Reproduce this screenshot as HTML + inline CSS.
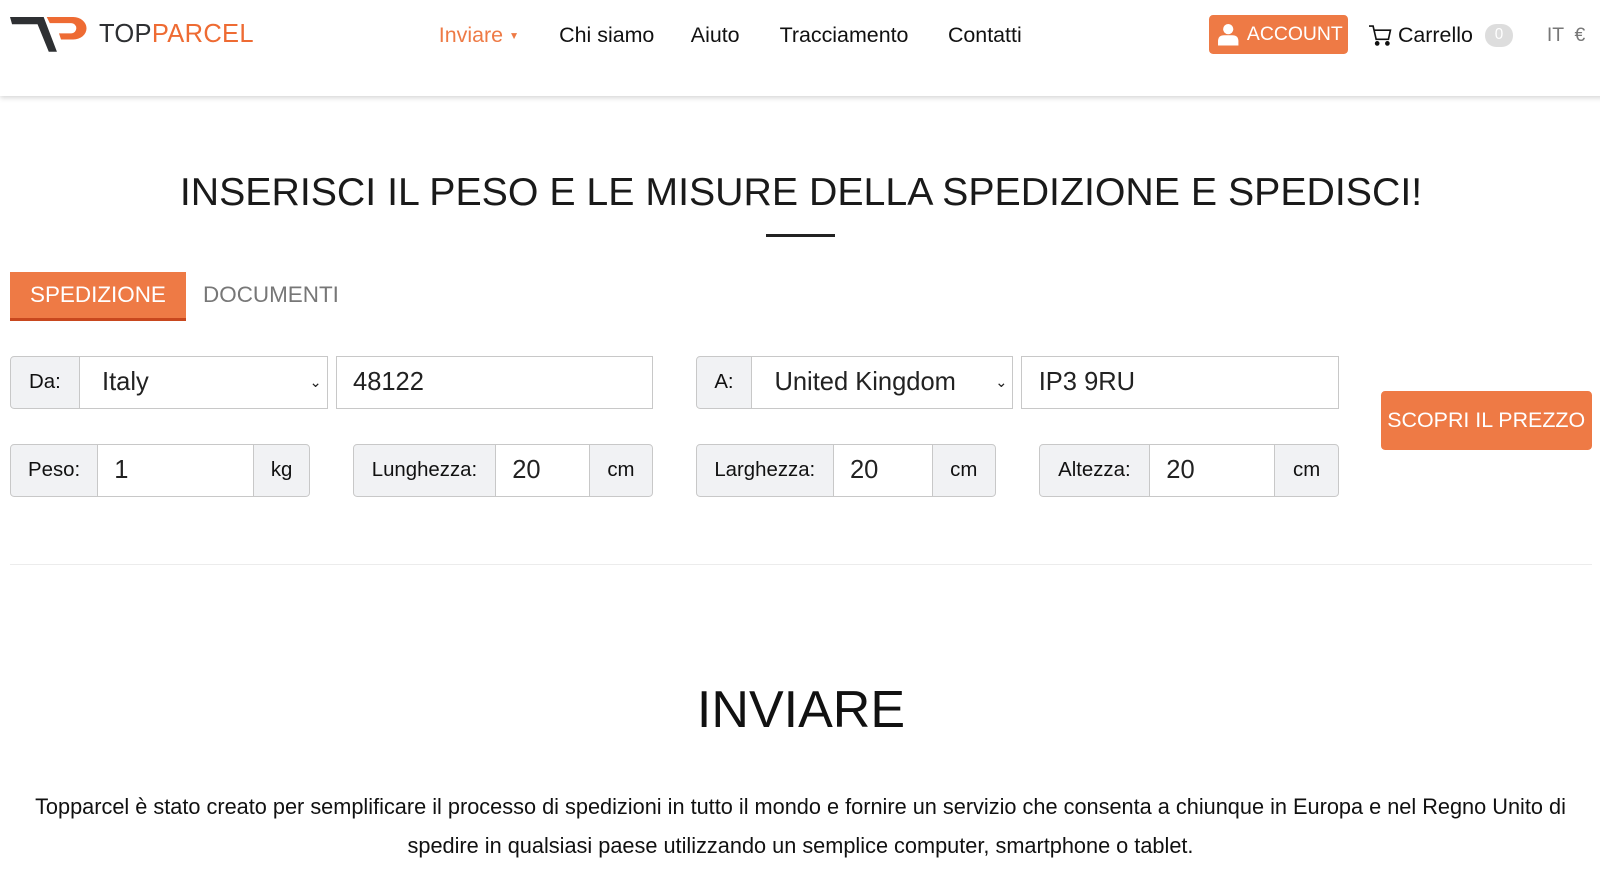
<!DOCTYPE html>
<html><head><meta charset="utf-8"><style>
*{box-sizing:border-box;margin:0;padding:0}
body{width:1600px;height:869px;background:#fff;font-family:"Liberation Sans",sans-serif;color:#111;overflow:hidden}
#w{position:relative;width:1568px;height:852px;zoom:1.0204}
.a{position:absolute}
.hdr{left:0;top:0;width:1600px;height:94px;background:#fff;box-shadow:0 2px 5px rgba(0,0,0,.18)}
.nav{font-size:21px;top:23px;color:#111}
.box{position:absolute;border:1px solid #c8c8c8;background:#fff;display:flex;align-items:center;font-size:25px;color:#222}
.lab{position:absolute;border:1px solid #c8c8c8;background:#f1f2f4;display:flex;align-items:center;justify-content:center;font-size:20px;color:#111}
</style></head><body><div id="w">
<div class="a hdr"></div>
<svg class="a" style="left:10px;top:14px" width="76" height="38" viewBox="0 0 76 38">
<polygon points="0,3 33,3 46,37 38,37 27,10 2,10" fill="#2e3033"/>
<path d="M36,3 H62 A13,11 0 0 1 62,25 H50 L48,19 H60 A5,5 0 0 0 60,9 H39 Z" fill="#ee6b33"/>
</svg>
<div class="a" style="left:97px;top:20px;font-size:25px;letter-spacing:0.3px"><span style="color:#2e3033">TOP</span><span style="color:#ee6b33">PARCEL</span></div>
<div class="a nav" style="left:430px;color:#ee7a45">Inviare <span style="font-size:10px;vertical-align:middle">▼</span></div>
<div class="a nav" style="left:548px">Chi siamo</div>
<div class="a nav" style="left:677px">Aiuto</div>
<div class="a nav" style="left:764px">Tracciamento</div>
<div class="a nav" style="left:929px">Contatti</div>
<div class="a" style="left:1185px;top:15px;width:136px;height:38px;background:#ee7a45;border-radius:4px;color:#fff;font-size:19px;display:flex;align-items:center">
<svg style="margin-left:8px" width="22" height="22" viewBox="0 0 22 22"><circle cx="11" cy="6" r="5" fill="#fff"/><path d="M1,22 V18 Q1,12 7,12 H15 Q21,12 21,18 V22Z" fill="#fff"/></svg>
<span style="margin-left:7px">ACCOUNT</span></div>
<svg class="a" style="left:1341px;top:23px" width="24" height="24" viewBox="0 0 24 24" fill="none" stroke="#111" stroke-width="1.6"><path d="M1,3 H5 L8,16 H20 L22,7 H6"/><circle cx="9" cy="20" r="1.5" fill="#111"/><circle cx="19" cy="20" r="1.5" fill="#111"/></svg>
<div class="a nav" style="left:1370px">Carrello</div>
<div class="a" style="left:1455px;top:24px;width:28px;height:22px;border-radius:11px;background:#ddd;color:#fff;font-size:15px;text-align:center;line-height:22px">0</div>
<div class="a" style="left:1516px;top:24px;font-size:19px;color:#777">IT &nbsp;€</div>

<div class="a" style="left:0;width:1570px;top:167px;text-align:center;font-size:38.5px;color:#1a1a1a">INSERISCI IL PESO E LE MISURE DELLA SPEDIZIONE E SPEDISCI!</div>
<div class="a" style="left:751px;top:229px;width:67px;height:3px;background:#222"></div>

<div class="a" style="left:10px;top:267px;width:172px;height:48px;background:#ee7a45;border-bottom:3px solid #c8471e;color:#fff;font-size:22px;text-align:center;line-height:46px">SPEDIZIONE</div>
<div class="a" style="left:199px;top:267px;height:48px;color:#777;font-size:22px;line-height:46px">DOCUMENTI</div>

<div class="lab" style="left:10px;top:349px;width:68px;height:52px;border-radius:4px 0 0 4px">Da:</div>
<div class="box" style="left:77px;top:349px;width:244px;height:52px;padding-left:22px">Italy<span style="position:absolute;right:5px;font-size:14px">⌄</span></div>
<div class="box" style="left:329px;top:349px;width:311px;height:52px;padding-left:16px">48122</div>
<div class="lab" style="left:682px;top:349px;width:55px;height:52px;border-radius:4px 0 0 4px">A:</div>
<div class="box" style="left:736px;top:349px;width:257px;height:52px;padding-left:22px">United Kingdom<span style="position:absolute;right:5px;font-size:14px">⌄</span></div>
<div class="box" style="left:1001px;top:349px;width:311px;height:52px;padding-left:16px">IP3 9RU</div>

<div class="lab" style="left:10px;top:435px;width:86px;height:52px;border-radius:4px 0 0 4px">Peso:</div>
<div class="box" style="left:95px;top:435px;width:154px;height:52px;padding-left:16px">1</div>
<div class="lab" style="left:248px;top:435px;width:56px;height:52px;border-radius:0 4px 4px 0">kg</div>
<div class="lab" style="left:346px;top:435px;width:140px;height:52px;border-radius:4px 0 0 4px">Lunghezza:</div>
<div class="box" style="left:485px;top:435px;width:93px;height:52px;padding-left:16px">20</div>
<div class="lab" style="left:577px;top:435px;width:63px;height:52px;border-radius:0 4px 4px 0">cm</div>
<div class="lab" style="left:682px;top:435px;width:135px;height:52px;border-radius:4px 0 0 4px">Larghezza:</div>
<div class="box" style="left:816px;top:435px;width:98px;height:52px;padding-left:16px">20</div>
<div class="lab" style="left:913px;top:435px;width:63px;height:52px;border-radius:0 4px 4px 0">cm</div>
<div class="lab" style="left:1018px;top:435px;width:109px;height:52px;border-radius:4px 0 0 4px">Altezza:</div>
<div class="box" style="left:1126px;top:435px;width:124px;height:52px;padding-left:16px">20</div>
<div class="lab" style="left:1249px;top:435px;width:63px;height:52px;border-radius:0 4px 4px 0">cm</div>

<div class="a" style="left:1353px;top:383px;width:207px;height:58px;background:#ee7a45;border-radius:4px;color:#fff;font-size:21px;text-align:center;line-height:58px">SCOPRI IL PREZZO</div>

<div class="a" style="left:10px;top:553px;width:1550px;height:1px;background:#ececec"></div>

<div class="a" style="left:0;width:1570px;top:666px;text-align:center;font-size:51px;color:#111">INVIARE</div>
<div class="a" style="left:22px;width:1525px;top:772px;text-align:center;font-size:21.3px;line-height:38px;color:#111">Topparcel è stato creato per semplificare il processo di spedizioni in tutto il mondo e fornire un servizio che consenta a chiunque in Europa e nel Regno Unito di spedire in qualsiasi paese utilizzando un semplice computer, smartphone o tablet.</div>
</div></body></html>
